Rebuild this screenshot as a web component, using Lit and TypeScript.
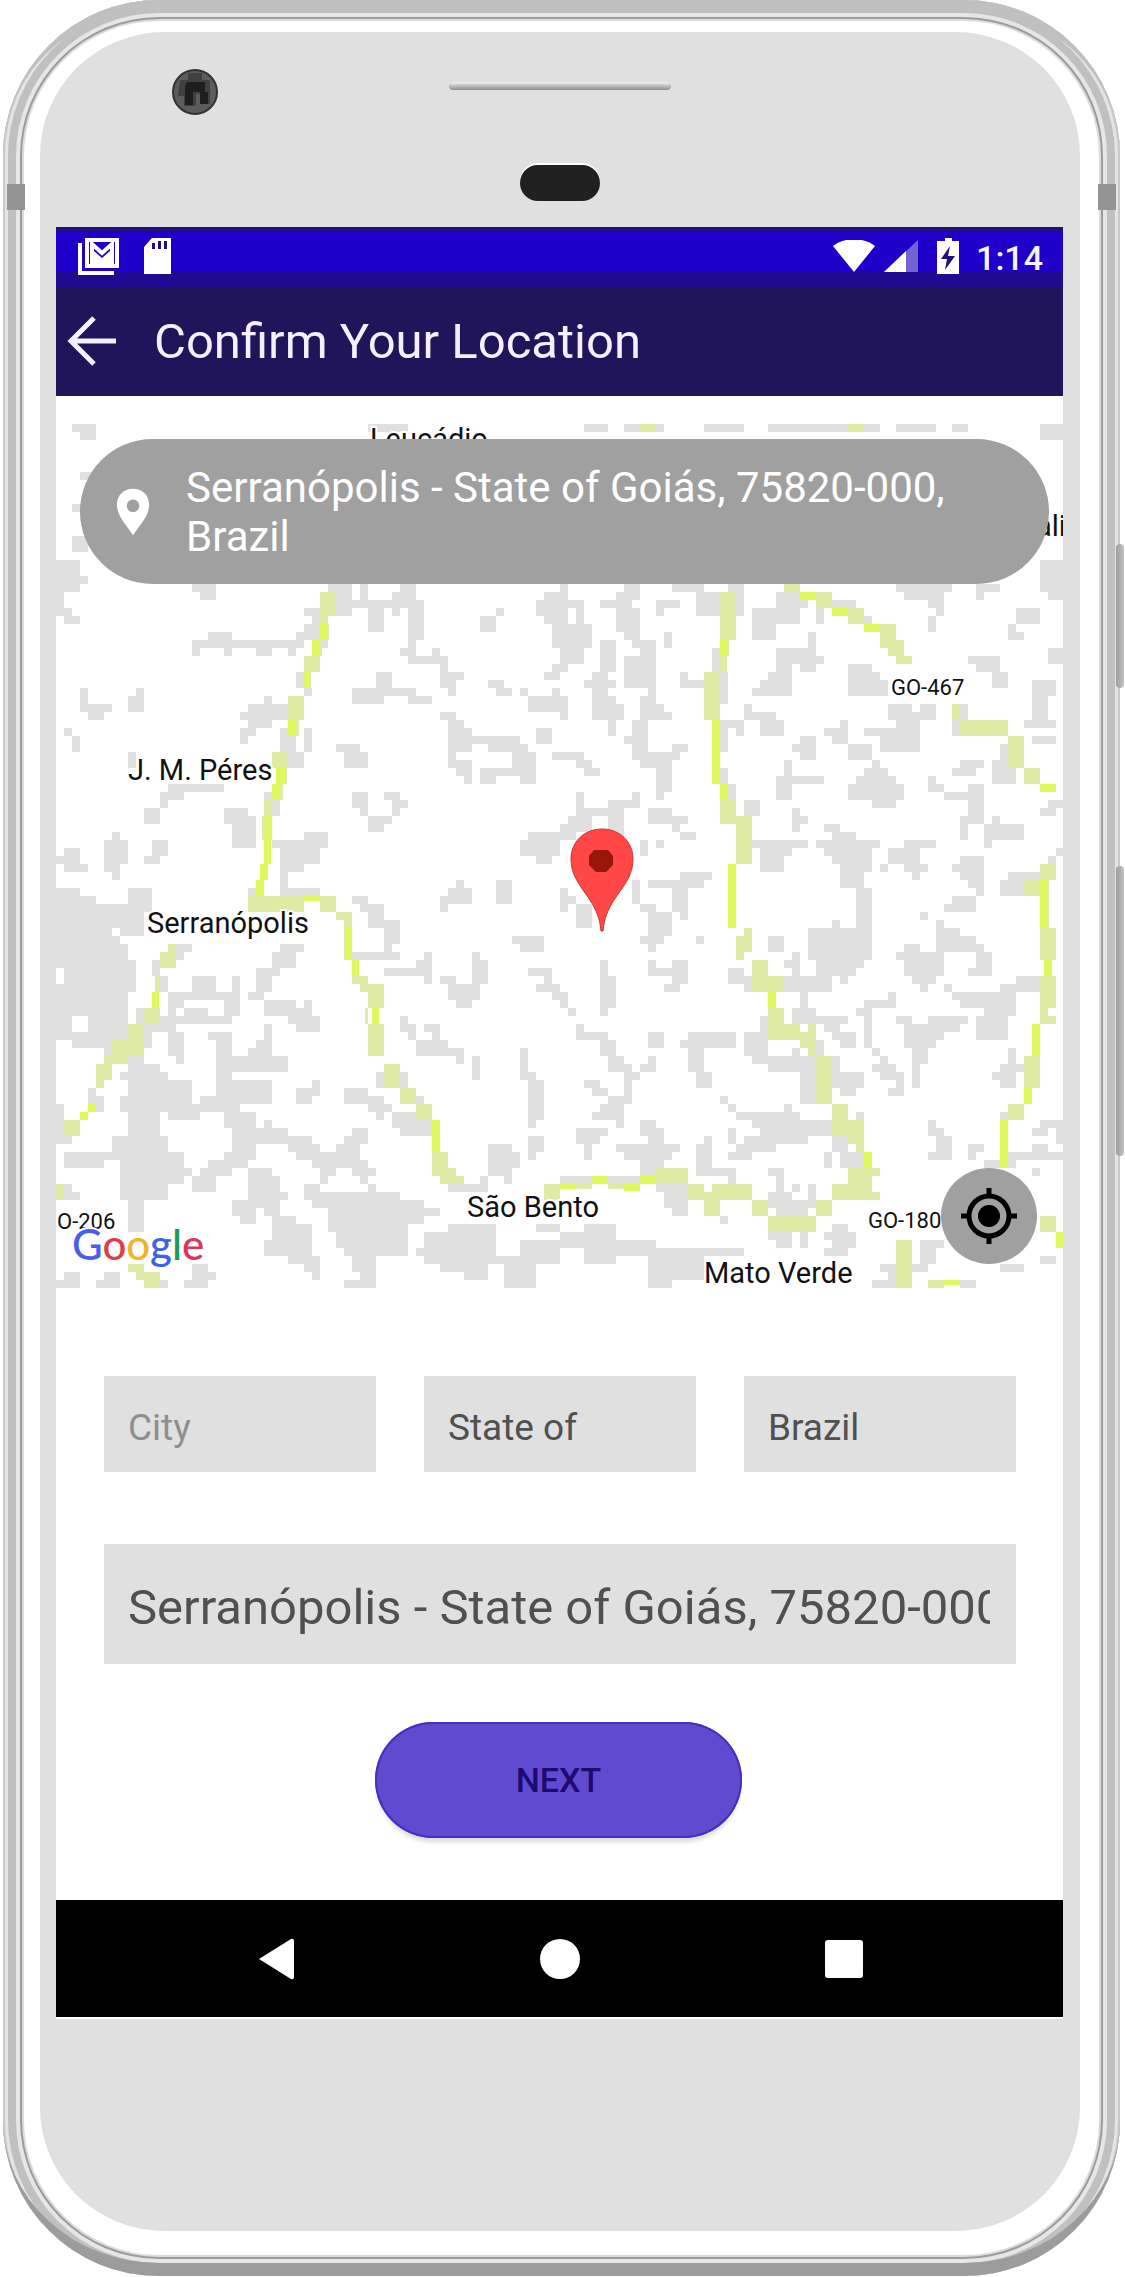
import { LitElement, html, svg, css } from "lit";
import { customElement, state } from "lit/decorators.js";

/** One survey tile of the map: boxes are "x1,y1,x2,y2" in tile units. */
interface Tile {
  transform: string;
  terrain: string;
  road: string;
  core: string;
}

const boxes = (list: string): string =>
  list
    .trim()
    .split(/\s+/)
    .map((b) => {
      const [x1, y1, x2, y2] = b.split(",").map(Number);
      return `M${x1} ${y1}H${x2}V${y2}H${x1}Z`;
    })
    .join("");

const TILES: Tile[] = [
  {
    transform: "translate(40 380) scale(.33333)",
    terrain: `96,132,168,156 120,156,168,180 984,132,1104,156 120,276,160,300 96,372,140,396 96,468,144,516
      48,540,120,636 120,588,144,612 48,636,72,708 72,684,96,732 96,708,120,732
      456,612,528,636 480,636,528,660 864,612,936,708 960,612,984,660 936,660,1128,684 1080,612,1128,684
      1056,636,1080,708 984,660,1032,756 1104,660,1152,780 1104,780,1128,828 1080,804,1128,828 1104,828,1200,852
      1176,804,1200,852 1200,828,1224,924 1224,876,1272,900 1224,900,1248,948 792,684,840,708 816,708,840,756
      792,732,840,756 768,756,840,780 504,756,576,780 456,780,792,804 456,804,480,828 552,804,576,828 648,804,696,828
      744,804,768,828 840,780,864,804 768,876,792,924 792,924,816,948 120,924,144,996 144,972,216,996 144,996,192,1020
      264,948,312,996 288,924,312,948 672,948,696,972 624,972,744,996 600,996,744,1020 624,1020,696,1044
      600,1044,648,1068 600,1068,624,1092 720,1044,744,1116 744,1068,768,1116 792,1044,816,1116 744,1116,792,1164
      72,1044,96,1068 96,1068,120,1116 264,1116,288,1164 1008,876,1056,924 936,924,1128,948 936,948,1032,972
      1104,948,1176,972 1320,708,1368,756 1368,684,1392,708 1488,660,1560,708 1512,636,1560,732 1536,732,1560,804
      1536,852,1560,900 1512,876,1560,900 1344,900,1392,924 1368,924,1416,948 1440,924,1464,948 1464,948,1560,996
      1536,924,1560,948 1200,996,1248,1020 1224,1020,1272,1044 1224,1044,1296,1116 1296,1068,1440,1092
      1344,1092,1464,1116 1224,1116,1248,1164 1248,1140,1296,1188 1272,1188,1296,1212 1416,1116,1488,1164
      1320,1164,1488,1188 1320,1188,1368,1212 1440,1188,1488,1212 1488,1044,1536,1092 1536,1116,1560,1140
      888,1092,960,1116 912,1116,984,1164 384,1212,552,1236 360,1236,432,1260 360,1260,384,1284 312,1284,360,1332
      552,1284,624,1332 576,1308,648,1380 696,1260,720,1308 672,1236,696,1260 936,1236,984,1284 960,1284,984,1308
      1032,1236,1080,1260 1056,1260,1104,1284 1056,1284,1080,1308 984,1308,1056,1332 984,1332,1032,1356
      216,1356,240,1380 792,1356,864,1380 1464,1356,1560,1380`,
    road: `840,636,888,708 840,708,864,732 856,732,866,780 838,780,846,828 792,828,840,876 806,876,814,924 744,948,792,1020
      766,1020,776,1068 696,1116,744,1164 732,1164,742,1212 720,1212,728,1260 672,1260,696,1308 666,1308,674,1380`,
    core: `840,732,860,780 816,780,838,828 792,876,808,924 744,1020,768,1068 708,1164,734,1212 696,1212,720,1260
      674,1308,696,1380`,
  },
  {
    transform: "translate(560 380) scale(.36036 .33333)",
    terrain: `66,132,133,156 178,132,222,156 266,132,289,156 400,132,511,156 577,132,800,156 844,132,888,156
      932,132,1043,156 1088,132,1132,156 1332,132,1398,180 1332,540,1398,636 1354,636,1398,660
      0,612,22,660 0,660,66,684 0,684,22,732 44,684,66,732 0,732,88,804 0,780,66,852 0,828,22,876
      178,612,222,636 155,636,222,660 111,660,200,684 155,684,222,756 178,756,222,780 200,780,266,804 289,756,311,804
      222,804,266,852 178,828,266,900 178,876,244,924 244,900,266,972 222,948,266,1020 222,972,289,996 222,996,311,1020
      200,1020,244,1068 178,1068,244,1092 200,1092,244,1140 200,1116,333,1140 222,1140,311,1164 311,1092,355,1116
      266,1164,311,1236 266,1212,289,1260 311,612,400,636 266,660,289,708 289,660,333,684 377,636,400,708
      400,636,444,708 466,612,511,708 111,780,155,876 88,876,133,900 66,900,155,924 88,924,133,948 88,972,178,1020
      88,948,155,972 133,1020,155,1068 0,948,22,1020 333,876,355,924 355,900,400,924 422,804,444,876 444,876,466,972
      444,1020,466,1116 444,1020,511,1044 489,1044,511,1068 511,972,533,1020 533,996,600,1020 555,1020,622,1068
      533,684,600,780 600,636,666,732 600,636,622,660 622,660,688,684 710,684,733,732 733,660,822,684 844,708,866,732
      688,756,710,804 600,804,710,828 600,828,644,876 644,828,733,852 666,852,710,876 577,876,644,924 555,900,644,948
      533,924,577,948 800,852,866,948 866,876,888,948 888,900,911,948 932,612,1088,636 955,636,1066,660
      1021,660,1066,684 1043,684,1066,708 1155,612,1221,636 1155,636,1177,660 1266,684,1332,732 1021,708,1043,756
      1243,732,1266,780 1266,756,1288,780 1354,804,1398,852 1132,828,1221,852 1155,852,1221,876 1199,876,1243,924
      1310,900,1376,948 1310,948,1354,1020 1288,1020,1376,1044 1310,1068,1376,1092 1332,996,1354,1044
      911,972,977,996 911,996,999,1020 932,1020,999,1116 888,1044,932,1068 844,1044,888,1068 999,972,1043,1020
      1088,1020,1110,1068 1110,972,1132,1020 777,1020,800,1092 733,1044,800,1068 755,1068,800,1092
      666,1068,710,1140 644,1092,710,1116 800,1092,866,1140 888,1068,932,1116 622,1140,644,1212 600,1188,733,1212
      600,1212,644,1260 866,1140,888,1188 844,1164,911,1212 822,1188,932,1260 800,1212,955,1260 866,1260,932,1284
      1021,1188,1043,1236 1043,1212,1066,1236 1066,1236,1177,1260 1132,1212,1177,1260 1132,1260,1177,1332
      1110,1140,1177,1164 1088,1164,1155,1188 1199,1140,1266,1212 1221,1092,1243,1140 1288,1164,1332,1212
      1354,1260,1398,1284 1332,1284,1376,1308 0,1116,66,1140 44,1140,88,1164 66,1164,111,1188
      44,1236,66,1284 22,1308,88,1356 44,1284,178,1308 133,1260,222,1284 200,1236,222,1284 133,1308,178,1380
      0,1332,44,1380 244,1284,311,1332 289,1308,355,1332 311,1332,333,1356 333,1356,377,1380 511,1260,555,1308
      644,1284,666,1356 666,1308,688,1332 733,1332,777,1356 755,1356,822,1380 1110,1308,1132,1380
      1177,1332,1288,1380 1199,1308,1221,1332 444,1164,466,1212 466,1212,488,1260`,
    road: `222,132,266,156 800,132,844,156 444,636,488,780 464,780,470,828 444,828,464,876 400,876,444,1020
      444,1260,488,1332 488,1308,533,1380 710,636,755,684 800,684,844,732 888,732,932,804 911,780,955,828
      932,828,977,852 1088,972,1110,1020 1110,1020,1243,1068 1243,1068,1288,1164 1288,1164,1332,1212 622,588,666,636`,
    core: `444,780,464,828 422,1020,444,1212 444,1212,466,1260 666,636,710,660 755,684,800,708 844,732,888,756
      1332,1212,1376,1236`,
  },
  {
    transform: "translate(40 840) scale(.33333)",
    terrain: `48,48,72,72 72,24,120,96 120,72,144,96 192,0,264,72 192,72,240,96 216,96,240,120 336,0,384,48 312,48,360,72
      576,0,648,24 696,0,864,24 720,24,840,72 720,72,792,96 720,96,744,168 744,144,840,168 624,144,648,168
      1440,0,1560,48 1488,48,1536,72 1248,120,1272,144 1224,144,1296,192 1200,168,1224,216 1368,120,1416,192
      48,144,120,384 120,192,312,264 264,144,336,216 120,168,168,192 240,240,312,288 192,264,216,288
      120,264,192,312 120,288,240,528 72,312,264,528 240,312,264,528 264,360,288,456 48,432,96,600 96,576,264,624
      144,528,264,600 240,528,264,552 192,624,216,648 408,312,456,336 408,336,432,360 336,360,360,408 360,408,384,456
      288,504,312,552 720,312,792,336 696,336,768,384 648,384,720,408 648,408,696,456 624,456,672,480
      456,408,528,456 384,456,552,480 576,408,600,528 552,456,600,528 384,480,432,504 360,528,576,552 432,504,504,528
      384,504,408,552 312,552,408,576 384,576,432,648 408,648,432,672 312,576,336,624 504,576,576,600
      528,600,576,768 576,648,744,696 624,624,696,672 648,600,696,624 672,552,696,600 672,480,768,528 768,504,816,552
      792,480,816,528 816,528,840,576 768,552,816,576 744,528,768,552 936,168,984,192 960,192,1032,216
      984,216,1032,264 1032,240,1080,312 1032,312,1056,336 936,336,1080,360 1032,384,1176,408 1128,360,1176,408
      1152,336,1176,432 1200,408,1248,432 1224,432,1320,480 1248,480,1296,504 1296,336,1320,432 1320,360,1344,432
      1416,288,1512,312 1440,312,1512,336 1464,384,1536,408 1512,408,1536,432 1488,432,1560,456 1536,456,1560,480
      1080,528,1104,576 1104,552,1128,600 1152,552,1200,576 1176,576,1200,624 1128,600,1224,624 1128,624,1272,648
      1248,648,1272,672 1296,648,1320,720 1440,624,1464,720 1464,696,1488,744 1464,720,1512,840 1464,840,1488,864
      1464,888,1512,936 1464,936,1488,960 1344,912,1416,1008 1416,936,1440,984 1392,1008,1416,1032
      264,648,312,720 240,696,384,720 264,720,456,792 240,768,384,816 264,816,360,1008 216,888,384,936
      312,672,360,696 384,792,480,840 480,768,528,816 528,720,600,816 528,720,696,792 552,792,600,864 576,816,624,984
      600,816,648,960 624,864,744,912 672,840,696,912 720,888,816,912 744,912,840,936 768,936,960,960
      816,960,984,984 840,984,888,1008 936,984,1008,1008 960,1008,984,1032 984,1032,1008,1056
      888,912,960,936 912,888,984,912 936,864,984,888 768,744,816,792 816,720,840,768 912,744,984,792
      984,768,1032,816 1008,792,1056,816 1008,816,1032,840 1008,696,1032,744 1080,696,1104,744 1056,816,1128,864
      1080,840,1176,888 1128,768,1152,792 72,936,192,984 192,936,240,960 144,744,168,816 168,768,192,816
      144,792,192,816 48,792,72,912 72,888,96,912 240,936,432,1032 240,1008,384,1080 264,1080,312,1176
      384,984,456,1008 456,1008,528,1056 480,984,576,1008 504,960,600,984 552,936,624,960 624,984,696,1104
      648,1008,720,1104 672,1104,720,1128 696,1128,768,1200 744,1152,816,1272 672,1200,744,1248
      672,1224,816,1248 576,1080,624,1128 600,1104,648,1152 720,1056,744,1080 792,1032,840,1080 840,1008,864,1032
      816,1056,888,1104 888,1056,1080,1224 864,1080,1104,1176 1104,1080,1152,1152 1152,1104,1200,1128
      912,1176,1104,1248 888,1200,936,1224 936,1248,1008,1296 960,1296,1008,1344 912,1320,1008,1344
      1128,1224,1368,1248 1152,1176,1368,1272 1224,1152,1368,1200 1200,1248,1344,1296 1272,1296,1344,1320
      1368,1248,1560,1272 1392,1272,1488,1344 1440,1200,1560,1248 1488,1152,1560,1176 816,1272,840,1320
      792,1248,840,1296 72,1032,96,1056 72,1056,120,1080 72,1296,120,1344 48,1320,96,1344 168,1320,240,1344
      192,1296,240,1320 360,1320,384,1344 456,1272,504,1344 432,1320,480,1344 504,1296,528,1320
      1224,1032,1344,1056 1320,1008,1344,1032`,
    road: `624,168,792,216 840,168,888,216 888,216,936,240 912,240,936,264 912,264,916,360 936,408,984,432 960,432,984,456
      984,432,1032,504 984,552,1032,648 1032,672,1080,744 1080,744,1128,792 1128,792,1176,840 1176,936,1224,1008
      1200,984,1248,1032 1248,1008,1272,1032 384,312,408,384 360,336,408,384 344,408,360,456 312,504,360,552
      264,552,312,648 216,600,264,672 192,648,216,672 168,672,216,720 168,720,192,744 72,840,120,888
      24,1032,72,1080 264,1272,312,1296 288,1296,312,1320 312,1296,360,1344 1512,1032,1560,1080 976,504,984,552`,
    core: `672,0,694,72 660,72,684,120 648,120,672,168 792,168,840,184 916,264,936,360 936,360,958,408 996,504,1018,552
      1176,840,1200,936 336,456,358,504 144,792,168,816 120,816,144,840`,
  },
  {
    transform: "translate(560 840) scale(.36036 .33333)",
    terrain: `222,0,289,24 222,24,266,48 244,48,266,0 111,0,133,48 333,96,422,120 266,120,400,144 244,120,355,144
      311,144,355,216 333,216,355,240 200,120,222,192 222,192,266,216 244,216,311,240 244,240,311,288
      222,288,289,312 244,312,266,336 377,288,400,312 44,192,89,264 0,144,22,216 22,168,44,192
      555,24,622,96 533,0,688,24 577,24,622,72 600,24,644,48 710,0,866,24 733,24,822,48 755,48,822,72
      822,0,866,96 777,72,866,96 777,96,844,144 822,144,866,360 755,240,777,288 688,264,866,360 710,336,844,384
      710,360,822,408 777,408,800,432 866,0,888,24 888,72,911,96 955,0,1043,24 911,24,999,72 955,72,1021,96
      977,96,999,120 1088,72,1155,96 1110,48,1177,96 1110,72,1132,120 1132,96,1177,144 1155,144,1177,168
      1177,0,1199,24 1376,24,1398,48 1354,48,1376,72 1243,96,1332,120 1221,120,1288,168 1088,168,1155,216
      1066,192,1132,216 999,216,1021,240 1043,240,1066,336 1043,264,1110,336 1043,288,1155,312 1110,312,1177,336
      1155,336,1199,384 955,312,999,336 932,336,1066,360 955,360,1066,408 977,408,1043,432 999,432,1021,456
      1066,432,1088,456 1088,456,1155,480 1110,480,1199,504 1132,384,1199,408 1155,456,1266,480 1221,432,1332,456
      1266,408,1332,432 1199,480,1266,528 1155,528,1243,600 1177,504,1243,576
      111,360,133,408 111,408,155,504 111,504,133,528 244,360,266,408 266,384,311,408 311,360,355,432 289,432,333,456
      0,456,22,504 22,504,44,528 44,552,66,600 66,576,133,600 111,600,155,648 133,648,178,672 133,672,200,696
      178,696,222,720 178,720,200,792 222,672,266,696 244,648,266,672 244,576,289,624 266,576,289,624
      355,576,489,600 333,600,489,624 355,624,400,696 377,696,422,744 466,384,511,432 511,408,533,456
      555,528,577,600 511,576,577,648 533,648,666,672 577,672,710,696 644,624,666,672 666,648,710,744
      666,744,710,792 577,288,622,336 600,312,622,336 644,336,666,408 622,360,666,384 622,408,755,432
      622,432,755,456 666,456,688,504 644,504,710,552 710,528,800,552 733,552,777,576 755,576,822,600
      777,600,822,624 710,600,733,648 755,648,777,720 777,696,844,720 755,720,822,744 822,720,844,744 777,744,822,768
      844,480,932,504 822,504,866,528 911,456,932,504 844,528,866,624 866,624,888,648 888,648,911,672
      866,672,932,696 888,696,932,720 932,696,955,768 911,744,955,768
      932,528,977,552 955,552,1066,600 1021,528,1132,552 1021,552,1110,576 955,600,1043,624 977,624,1021,672
      977,672,999,744 1243,624,1266,672 1221,672,1288,696 1199,696,1266,720 1221,720,1266,744
      66,720,111,744 88,744,133,768 133,768,200,792 111,792,178,816 88,816,178,840 155,840,178,864
      44,864,133,888 44,888,111,912 66,912,89,960 222,840,266,888 222,864,289,888 155,912,333,936 178,936,311,960
      244,888,289,984 222,960,266,1008 444,768,466,792 466,792,489,816 489,816,666,840 533,840,688,864 555,864,755,888
      511,888,688,912 489,912,600,936 466,936,533,960 622,792,644,816 666,840,755,888 466,864,489,912
      400,888,422,1008 377,912,422,960 377,960,400,984 377,984,489,1008 466,984,489,1032
      577,984,622,1008 600,1008,622,1080 577,1056,644,1080 577,1080,710,1104 600,1104,688,1128
      644,1032,666,1056 688,1032,710,1080 733,936,755,984 755,912,800,936 777,936,844,984
      822,816,844,840 755,888,800,912 1021,840,1043,888 1043,864,1066,912 1043,888,1088,960 1021,936,1066,960
      1132,912,1155,960 1155,912,1177,936 1266,936,1398,960 1310,912,1354,960 1332,840,1398,864 1310,864,1354,888
      1376,864,1398,912 1177,960,1221,984 1221,816,1243,840 1243,936,1266,984 1310,984,1332,1008
      0,1008,89,1032 133,1008,222,1032 266,1032,355,1056 289,1056,355,1104 311,1104,355,1128
      66,1152,155,1272 0,1176,66,1224 22,1200,244,1224 88,1224,377,1248 244,1200,266,1320 266,1248,400,1320
      244,1320,311,1344 377,1224,511,1248 444,1128,466,1152 577,1176,622,1200 600,1176,644,1224 666,1176,688,1224
      733,1176,822,1200 755,1152,800,1200 755,1200,822,1224 733,1224,800,1248 888,1272,932,1296 911,1296,932,1320
      866,1320,932,1344 999,1200,1066,1224 999,1224,1043,1272 977,1272,1021,1296 1110,1320,1155,1344
      1332,1248,1376,1272 1221,1272,1288,1296`,
    road: `488,0,533,72 488,288,533,336 511,264,533,288 488,336,511,360 533,360,577,456 577,408,622,456 577,504,622,600
      622,552,666,600 666,576,710,624 688,552,710,648 710,648,755,792 755,792,800,888 800,840,844,912 822,912,844,936
      800,984,866,1080 866,984,888,1008 866,1056,888,1080 755,1032,800,1080 710,1080,755,1128 577,1128,710,1176
      533,1080,577,1128 355,1032,400,1080 400,1056,533,1080 422,1032,533,1056 400,1080,444,1128 266,984,355,1032
      133,1032,178,1048 44,1032,89,1048 1332,72,1376,120 1288,120,1332,168 1332,264,1376,360 1332,408,1376,504
      1332,504,1354,552 1354,528,1376,552 1288,648,1332,744 1243,792,1288,840 1332,1128,1376,1176
      932,1200,977,1344 1021,1320,1066,1344 1348,120,1356,264`,
    core: `466,72,489,264 577,456,600,504 844,936,866,984 0,1032,44,1048 89,1008,133,1032 178,1032,222,1054
      222,1008,266,1032 1332,120,1352,264 1344,360,1364,408 1310,552,1332,648 1288,744,1310,792 1221,840,1243,984
      1376,1176,1400,1224 1066,1320,1110,1336`,
  },
];

const PLACES = [
  { x: 370, y: 449, size: 29, name: "Leucádio" },
  { x: 1036, y: 536, size: 29, name: "alia" },
  { x: 128, y: 780, size: 29, name: "J. M. Péres" },
  { x: 891, y: 695, size: 22, name: "GO-467" },
  { x: 147, y: 933, size: 29, name: "Serranópolis" },
  { x: 467, y: 1217, size: 29, name: "São Bento" },
  { x: 868, y: 1228, size: 22, name: "GO-180" },
  { x: 57, y: 1229, size: 22, name: "O-206" },
  { x: 704, y: 1283, size: 29, name: "Mato Verde" },
];

const LOGO = [
  ["G", "#4b5df0"],
  ["o", "#dc3f4c"],
  ["o", "#f0b428"],
  ["g", "#3d62e8"],
  ["l", "#189a63"],
  ["e", "#e0335a"],
];

@customElement("location-map")
class LocationMap extends LitElement {
  static styles = css`
    :host {
      display: block;
    }
    .map {
      display: block;
      width: 100%;
      height: auto;
    }
    .terrain {
      fill: #e0e0e0;
    }
    .road {
      fill: #dfeaa5;
    }
    .core {
      fill: #dff85e;
    }
    .place {
      fill: #111;
      stroke: #fff;
      stroke-width: 4px;
      paint-order: stroke;
      font-family: Roboto, "Liberation Sans", sans-serif;
    }
    .logo {
      font: 500 42px Lato, "Liberation Sans", sans-serif;
      stroke: #fff;
      stroke-width: 4px;
      paint-order: stroke;
    }
  `;

  render() {
    return html`<svg class="map" viewBox="56 396 1007 900" role="img" aria-label="Map around Serranópolis">
      <g shape-rendering="crispEdges">
        ${TILES.map(
          (t) => svg`<g transform=${t.transform}>
            <path class="terrain" d=${boxes(t.terrain)} />
            <path class="road" d=${boxes(t.road)} />
            <path class="core" d=${boxes(t.core)} />
          </g>`
        )}
      </g>
      ${PLACES.map((p) => svg`<text class="place" x=${p.x} y=${p.y} font-size=${p.size}>${p.name}</text>`)}
      <text class="logo" x="72" y="1260">${LOGO.map(([c, fill]) => svg`<tspan fill=${fill}>${c}</tspan>`)}</text>
      <path d="M602 829c-18 0-31 13-31 30 0 22 17 34 24 50 4 8 5 14 6 22h2c1-8 2-14 6-22 7-16 24-28 24-50 0-17-13-30-31-30z" fill="#ff4747" stroke="#c43a32" stroke-width="1" />
      <path d="M594 850h14l5 6v9l-7 7h-10l-7-7v-9z" fill="#9a1608" />
    </svg>`;
  }
}

@customElement("app-root")
class AppRoot extends LitElement {
  @state() private city = "";
  @state() private region = "State of";
  @state() private country = "Brazil";
  @state() private address = "Serranópolis - State of Goiás, 75820-000, Brazil";

  static styles = css`
    :host {
      display: block;
      background: #fff;
      font-family: Roboto, "Liberation Sans", sans-serif;
    }
    * {
      box-sizing: border-box;
    }
    .device {
      position: relative;
      margin: 0 5px 0 3px;
      padding: 32px 40px 45px 37px;
      border-radius: 156px;
      background: #fff;
      box-shadow: inset 0 0 0 2px #c9c9c9, inset 0 0 0 5px #e4e4e4, inset 0 0 0 13px #c0c0c0,
        inset 0 0 0 17px #e6e6e6, inset 0 0 0 19px #9c9c9c, inset 0 0 0 21px #dcdcdc;
    }
    .rim {
      position: absolute;
      inset: 0;
      border-radius: 156px;
      border: solid transparent;
      border-width: 8px 0 13px;
      border-top-color: #c0c0c0;
      border-bottom-color: #9c9c9c;
    }
    .band {
      position: absolute;
      width: 18px;
      height: 26px;
      background: #949494;
    }
    .band-tl {
      top: 184px;
      left: 4px;
    }
    .band-tr {
      top: 184px;
      right: 4px;
    }
    .side-key {
      position: absolute;
      right: -4px;
      width: 8px;
      border-radius: 4px;
      background: linear-gradient(90deg, #9c9c9c, #c4c4c4);
    }
    .power {
      top: 544px;
      height: 144px;
    }
    .volume {
      top: 866px;
      height: 290px;
    }
    .face {
      position: relative;
      padding: 0 17px 0 16px;
      border-radius: 124px;
      background: #e0e0e0;
    }
    .forehead {
      display: grid;
      grid-template-columns: 1fr auto 1fr;
      height: 195px;
      padding: 36px 116px 0;
    }
    .camera {
      width: 46px;
      height: 48px;
    }
    .sensors {
      display: flex;
      flex-direction: column;
      align-items: center;
      padding-top: 14px;
      gap: 75px;
    }
    .speaker {
      width: 222px;
      height: 8px;
      border-radius: 4px;
      background: linear-gradient(#f4f4f4, #bcbcbc 50%, #8f8f8f);
    }
    .proximity {
      width: 80px;
      height: 36px;
      border-radius: 18px;
      background: #202020;
      box-shadow: 0 -2px 0 #fff;
    }
    .chin {
      height: 214px;
      border-top: 2px solid #fff;
    }
    .screen {
      background: #fff;
    }
    .status {
      display: flex;
      align-items: center;
      height: 61px;
      padding: 0 20px 0 21px;
      background: linear-gradient(#20107a 0 4px, #1f00cb 4px 45px, #200a90 45px);
      color: #f8f2ff;
    }
    .status-icons {
      display: flex;
      gap: 22px;
      margin-right: auto;
    }
    .status svg,
    .app-bar svg,
    .pill svg,
    .locate svg,
    .nav svg,
    .camera {
      display: block;
    }
    .signal {
      display: flex;
      align-items: center;
      gap: 6px;
    }
    .clock {
      margin-left: 4px;
      font-size: 34px;
      font-weight: 500;
      line-height: 40px;
    }
    .app-bar {
      display: flex;
      align-items: center;
      gap: 34px;
      height: 108px;
      padding: 0 10px;
      background: #20155a;
      color: #f5efff;
    }
    .title {
      margin: 0;
      font-size: 49px;
      font-weight: 400;
      line-height: 60px;
    }
    button {
      padding: 0;
      border: 0;
      background: none;
      color: inherit;
      font: inherit;
      cursor: pointer;
    }
    .map-area {
      position: relative;
    }
    .pill {
      position: absolute;
      top: 43px;
      left: 24px;
      right: 14px;
      display: flex;
      align-items: center;
      gap: 36px;
      min-height: 145px;
      padding: 0 80px 0 36px;
      border-radius: 73px;
      background: #a0a0a0;
      color: #fff;
      font-size: 42px;
      line-height: 49px;
    }
    .locate {
      position: absolute;
      right: 26px;
      bottom: 32px;
      display: grid;
      place-items: center;
      width: 96px;
      height: 96px;
      border-radius: 50%;
      background: #a0a0a0;
    }
    .form {
      display: flex;
      flex-direction: column;
      padding: 80px 47px 62px 48px;
    }
    .fields {
      display: grid;
      grid-template-columns: repeat(3, minmax(0, 1fr));
      gap: 72px 48px;
    }
    .field {
      width: 100%;
      height: 96px;
      padding: 6px 26px 0 24px;
      border: 0;
      border-radius: 0;
      background: #e0e0e0;
      color: #505050;
      font: 400 37px Roboto, "Liberation Sans", sans-serif;
    }
    .field::placeholder {
      color: #8e8e8e;
      opacity: 1;
    }
    .address {
      grid-column: 1 / -1;
      height: 120px;
      font-size: 49px;
    }
    .next {
      align-self: center;
      width: 367px;
      height: 116px;
      margin: 58px 3px 0 0;
      border-radius: 58px;
      background: #5f4ad0;
      box-shadow: inset 0 0 0 2px #4a2cc0, 0 6px 4px -2px #dcdcdc;
      color: #1f0a70;
      font-size: 34px;
      font-weight: 500;
    }
    .nav {
      display: grid;
      grid-template-columns: repeat(3, 284px);
      justify-content: center;
      justify-items: center;
      align-items: center;
      height: 117px;
      background: #000;
    }
  `;

  render() {
    return html`
      <div class="device">
        <div class="rim"></div>
        <div class="band band-tl"></div>
        <div class="band band-tr"></div>
        <div class="side-key power"></div>
        <div class="side-key volume"></div>
        <div class="face">
          <div class="forehead">
            <svg class="camera" viewBox="0 0 46 48">
              <circle cx="23" cy="24" r="22" fill="#5c5c5c" stroke="#333" stroke-width="2" />
              <path d="M8 12h8V5h14v7h8v24h-8V26h-6v12H12V28H6z" fill="#404040" />
              <path d="M15 14h18v10h3v12h-8V24h-7v13h-8V18z" fill="#1e1e1e" />
            </svg>
            <div class="sensors">
              <div class="speaker"></div>
              <div class="proximity"></div>
            </div>
          </div>
          <main class="screen">
            <div class="status">
              <div class="status-icons">
                <svg width="44" height="40" viewBox="0 0 44 40" fill="none" stroke="#fff" stroke-width="4">
                  <path d="M3 5v30h34" />
                  <path d="M10 2h30v26H10z" />
                  <path d="M15 28V6l10 9 10-9v22" />
                  <path d="M17 13l8 7 8-7v13H17z" fill="#fff" stroke="none" />
                </svg>
                <svg width="30" height="40" viewBox="0 0 30 40">
                  <path d="M9 0h19v36H1V9z" fill="#fff" />
                  <path d="M9 5h3v6H9zM15 3h3v8h-3zM21 3h3v8h-3z" fill="#20107a" />
                </svg>
              </div>
              <div class="signal">
                <svg width="44" height="36" viewBox="0 0 44 36">
                  <path d="M1 6C12-3 32-3 43 6L22 32z" fill="#fff" />
                </svg>
                <svg width="40" height="36" viewBox="0 0 40 36">
                  <path d="M2 32L36 0v32z" fill="#7263d6" />
                  <path d="M2 32L24 11v21z" fill="#fff" />
                </svg>
                <svg width="38" height="40" viewBox="0 0 38 40">
                  <path d="M13 3h4V0h7v3h7v33H9V3z" fill="#fff" />
                  <path d="M22 8l-9 13h6l-2 11 10-14h-7z" fill="#20107a" />
                </svg>
                <span class="clock">1:14</span>
              </div>
            </div>
            <header class="app-bar">
              <button aria-label="Back">
                <svg width="54" height="52" viewBox="0 0 54 52" fill="none" stroke="#f5efff" stroke-width="5">
                  <path d="M28 2L5 25l23 23M5 25h45" />
                </svg>
              </button>
              <h1 class="title">Confirm Your Location</h1>
            </header>
            <div class="map-area">
              <location-map></location-map>
              <div class="pill">
                <svg width="38" height="52" viewBox="0 0 38 52">
                  <path
                    d="M19 0C8 0 1 8 1 18c0 13 12 24 18 34 6-10 18-21 18-34C37 8 30 0 19 0zm0 12a7 7 0 110 14 7 7 0 010-14z"
                    fill="#fff"
                  />
                </svg>
                <span>Serranópolis - State of Goiás, 75820-000, Brazil</span>
              </div>
              <button class="locate" aria-label="My location">
                <svg width="56" height="56" viewBox="0 0 56 56" fill="none" stroke="#000" stroke-width="5">
                  <circle cx="28" cy="28" r="20" />
                  <circle cx="28" cy="28" r="11" fill="#000" stroke="none" />
                  <path d="M28 0v10M28 46v10M0 28h10M46 28h10" />
                </svg>
              </button>
            </div>
            <form class="form" @submit=${(e: Event) => e.preventDefault()}>
              <div class="fields">
                <input class="field" aria-label="City" placeholder="City" .value=${this.city} />
                <input class="field" aria-label="State" .value=${this.region} />
                <input class="field" aria-label="Country" .value=${this.country} />
                <input class="field address" aria-label="Address" .value=${this.address} />
              </div>
              <button class="next" type="submit">NEXT</button>
            </form>
            <nav class="nav">
              <button aria-label="Go back">
                <svg width="36" height="44" viewBox="0 0 36 44"><path d="M1 22L33 2q3-1 3 2v36q0 3-3 2z" fill="#fff" /></svg>
              </button>
              <button aria-label="Home">
                <svg width="40" height="40" viewBox="0 0 40 40"><circle cx="20" cy="20" r="20" fill="#fff" /></svg>
              </button>
              <button aria-label="Recent apps">
                <svg width="38" height="38" viewBox="0 0 38 38"><rect width="38" height="38" rx="3" fill="#fff" /></svg>
              </button>
            </nav>
          </main>
          <div class="chin"></div>
        </div>
      </div>
    `;
  }
}
